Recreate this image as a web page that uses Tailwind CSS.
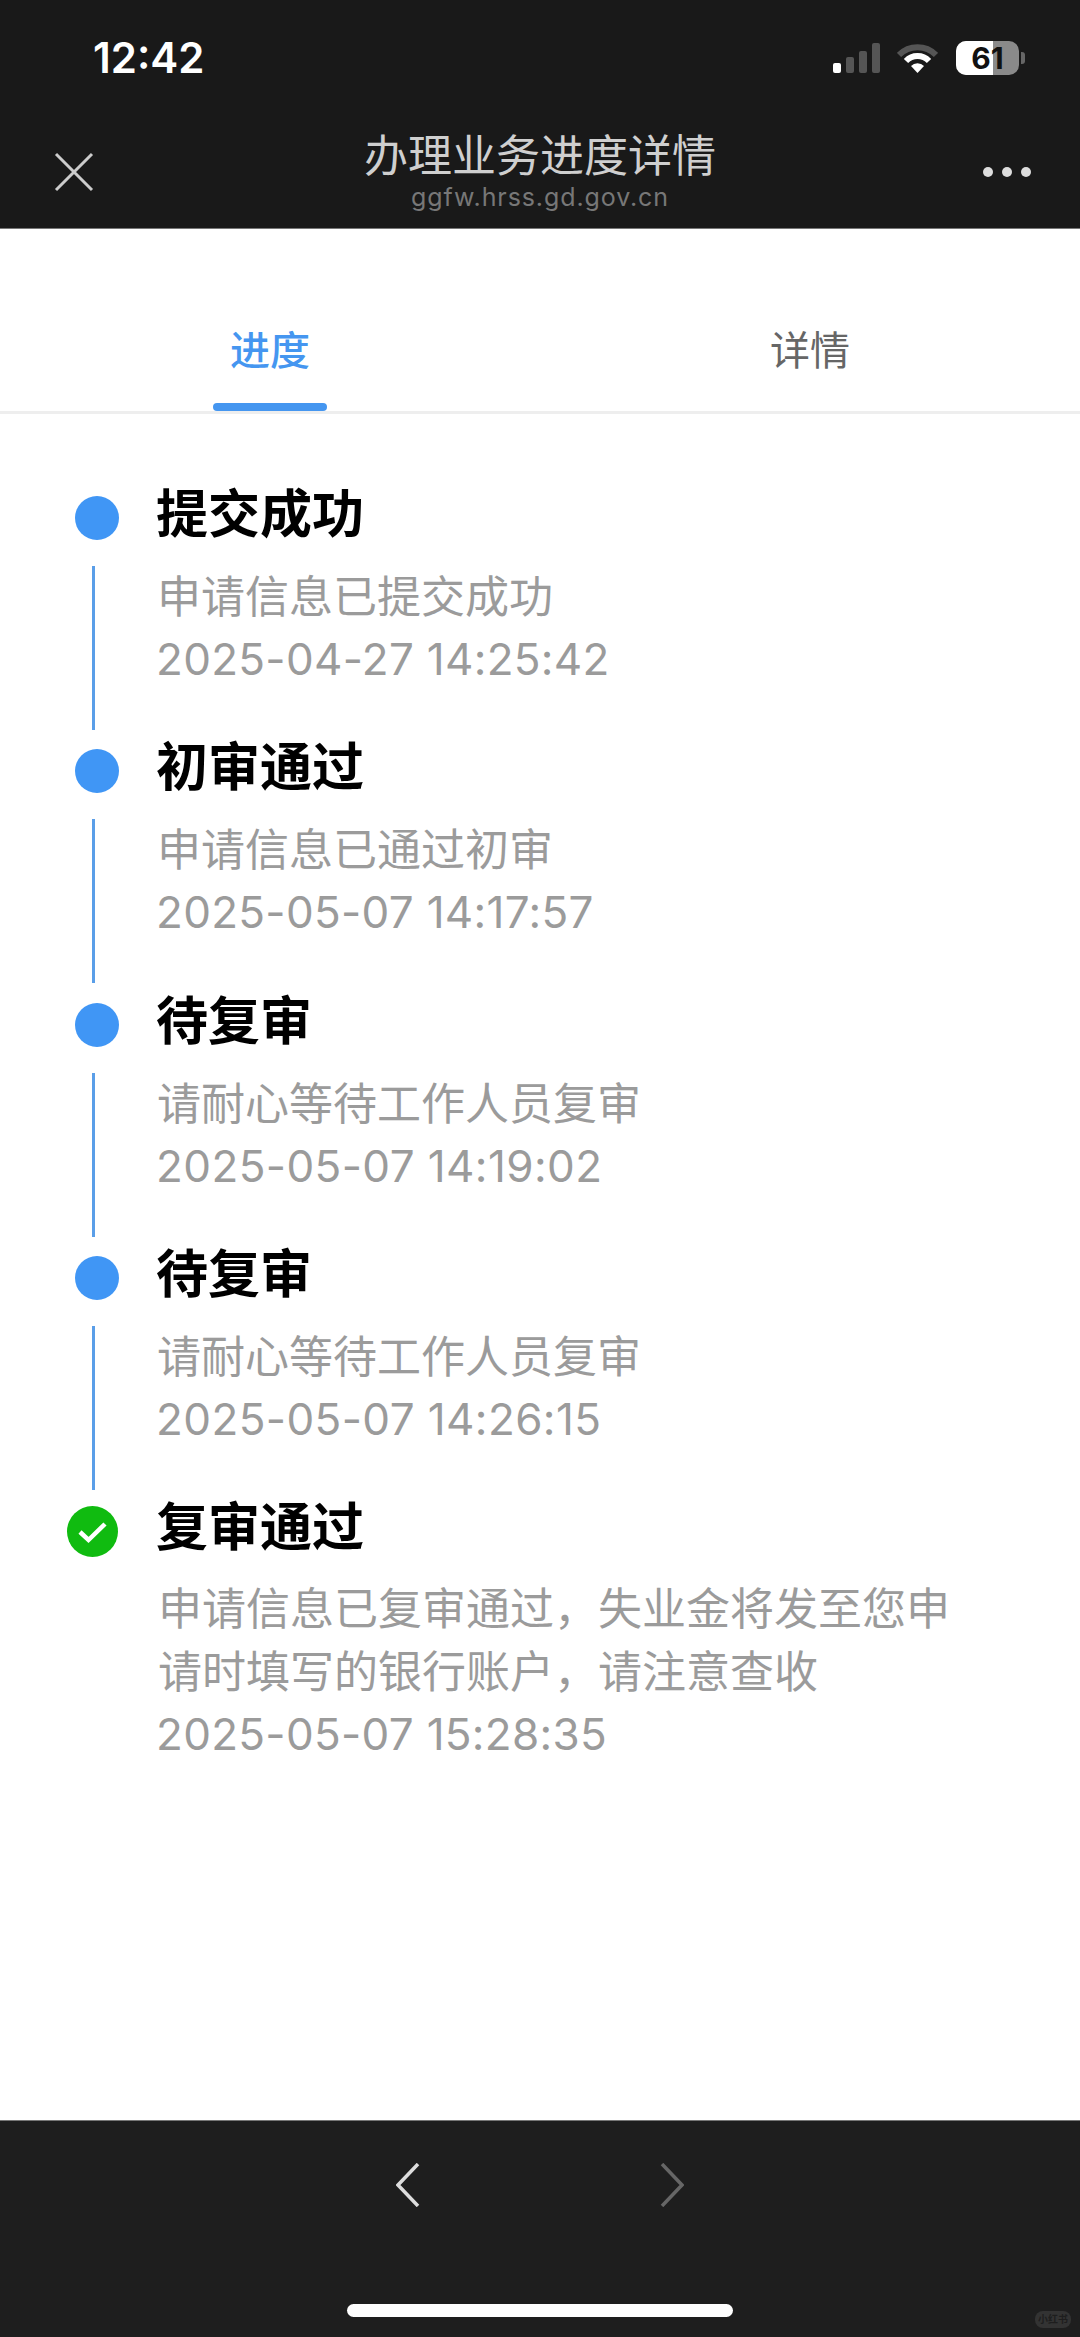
<!DOCTYPE html>
<html lang="zh">
<head>
<meta charset="UTF-8">
<title>办理业务进度详情</title>
<script src="https://cdn.jsdelivr.net/npm/@tailwindcss/browser@4"></script>
</head>
<body class="bg-white font-['Inter','Noto_Sans_CJK_SC',sans-serif]">
<div class="w-[1080px] h-[2337px] flex flex-col overflow-hidden">

  <!-- Top bars -->
  <header class="h-[229px] bg-[#191919] border-b border-[#777] shrink-0 flex flex-col">
    <div class="h-[118px] flex items-start pt-[37px] pl-[93px] pr-[55px]">
      <span class="text-[42px] leading-[42px] font-semibold text-white">12:42</span>
      <div class="ml-auto flex items-center mt-[4px]">
        <div class="flex items-end gap-[5px] h-[30px]">
          <span class="w-[8px] h-[10px] rounded-[2px] bg-white"></span>
          <span class="w-[8px] h-[16px] rounded-[2px] bg-[#555]"></span>
          <span class="w-[8px] h-[22px] rounded-[2px] bg-[#555]"></span>
          <span class="w-[8px] h-[30px] rounded-[2px] bg-[#555]"></span>
        </div>
        <svg class="ml-[17px]" width="41" height="30" viewBox="0 0 41 30">
          <path d="M2 12 A26 26 0 0 1 39 12" fill="none" stroke="#555" stroke-width="6"/>
          <path d="M9 18 A16 16 0 0 1 32 18" fill="none" stroke="#fff" stroke-width="6"/>
          <path d="M20.5 30 L14 23 A9 9 0 0 1 27 23 Z" fill="#fff"/>
        </svg>
        <div class="ml-[18px] relative w-[63px] h-[34px] rounded-[10px] overflow-hidden flex bg-[#8a8a8a]">
          <span class="w-[37px] bg-white"></span>
          <span class="absolute inset-0 flex items-center justify-center text-[30px] font-bold text-[#111] leading-none">61</span>
        </div>
        <span class="ml-[2px] w-[4px] h-[12px] rounded-r-[3px] bg-[#666]"></span>
      </div>
    </div>
    <div class="flex-1 flex items-start relative">
      <svg class="absolute left-[54px] top-[34px]" width="40" height="40" viewBox="0 0 40 40">
        <path d="M2 2 L38 38 M38 2 L2 38" stroke="#ccc" stroke-width="3" fill="none"/>
      </svg>
      <div class="w-full flex flex-col items-center">
        <span class="text-[44px] leading-[56px] text-[#cfcfcf] mt-[10px]">办理业务进度详情</span>
        <span class="text-[25px] leading-[28px] text-[#777] tracking-[0.9px] -mt-[1px]">ggfw.hrss.gd.gov.cn</span>
      </div>
      <div class="absolute right-[49px] top-[49px] flex gap-[9px]">
        <span class="w-[10px] h-[10px] rounded-full bg-[#ddd]"></span>
        <span class="w-[10px] h-[10px] rounded-full bg-[#ddd]"></span>
        <span class="w-[10px] h-[10px] rounded-full bg-[#ddd]"></span>
      </div>
    </div>
  </header>

  <!-- Tabs -->
  <nav class="h-[185px] shrink-0 flex items-end border-b-[3px] border-[#eee]">
    <div class="w-[540px] flex flex-col items-center">
      <span class="text-[40px] leading-[56px] font-medium text-[#4596f0]">进度</span>
      <span class="mt-[24px] w-[114px] h-[8px] rounded-[4px] bg-[#4596f0]"></span>
    </div>
    <div class="w-[540px] flex flex-col items-center">
      <span class="text-[40px] leading-[56px] text-[#666]">详情</span>
      <span class="mt-[24px] h-[8px]"></span>
    </div>
  </nav>

  <!-- Timeline -->
  <main class="flex-1 pt-[73px]">
    <div class="flex h-[253.3px]">
      <div class="w-[158px] pl-[75px] shrink-0 flex flex-col">
        <span class="mt-[9px] w-[44px] h-[44px] rounded-full bg-[#4096f5]"></span>
        <span class="mt-[26px] ml-[17px] w-[3px] h-[164px] bg-[#5a9ee8]"></span>
      </div>
      <div>
        <h2 class="text-[52px] leading-[56px] font-semibold text-black -ml-[2px]">提交成功</h2>
        <p class="mt-[23px] text-[44px] leading-[62px] -ml-[1px] text-[#9b9b9b]">申请信息已提交成功</p>
        <p class="text-[44px] leading-[62px] tracking-[0.3px] -ml-[2px] text-[#9b9b9b]">2025-04-27 14:25:42</p>
      </div>
    </div>
    <div class="flex h-[253.3px]">
      <div class="w-[158px] pl-[75px] shrink-0 flex flex-col">
        <span class="mt-[9px] w-[44px] h-[44px] rounded-full bg-[#4096f5]"></span>
        <span class="mt-[26px] ml-[17px] w-[3px] h-[164px] bg-[#5a9ee8]"></span>
      </div>
      <div>
        <h2 class="text-[52px] leading-[56px] font-semibold text-black -ml-[2px]">初审通过</h2>
        <p class="mt-[23px] text-[44px] leading-[62px] -ml-[1px] text-[#9b9b9b]">申请信息已通过初审</p>
        <p class="text-[44px] leading-[62px] tracking-[0.3px] -ml-[2px] text-[#9b9b9b]">2025-05-07 14:17:57</p>
      </div>
    </div>
    <div class="flex h-[253.3px]">
      <div class="w-[158px] pl-[75px] shrink-0 flex flex-col">
        <span class="mt-[9px] w-[44px] h-[44px] rounded-full bg-[#4096f5]"></span>
        <span class="mt-[26px] ml-[17px] w-[3px] h-[164px] bg-[#5a9ee8]"></span>
      </div>
      <div>
        <h2 class="text-[52px] leading-[56px] font-semibold text-black -ml-[2px]">待复审</h2>
        <p class="mt-[23px] text-[44px] leading-[62px] -ml-[1px] text-[#9b9b9b]">请耐心等待工作人员复审</p>
        <p class="text-[44px] leading-[62px] tracking-[0.4px] -ml-[2px] text-[#9b9b9b]">2025-05-07 14:19:02</p>
      </div>
    </div>
    <div class="flex h-[253.3px]">
      <div class="w-[158px] pl-[75px] shrink-0 flex flex-col">
        <span class="mt-[9px] w-[44px] h-[44px] rounded-full bg-[#4096f5]"></span>
        <span class="mt-[26px] ml-[17px] w-[3px] h-[164px] bg-[#5a9ee8]"></span>
      </div>
      <div>
        <h2 class="text-[52px] leading-[56px] font-semibold text-black -ml-[2px]">待复审</h2>
        <p class="mt-[23px] text-[44px] leading-[62px] -ml-[1px] text-[#9b9b9b]">请耐心等待工作人员复审</p>
        <p class="text-[44px] leading-[62px] tracking-[0.4px] -ml-[2px] text-[#9b9b9b]">2025-05-07 14:26:15</p>
      </div>
    </div>
    <div class="flex">
      <div class="w-[158px] pl-[67px] shrink-0">
        <svg class="mt-[6px]" width="51" height="51" viewBox="0 0 51 51">
          <circle cx="25.5" cy="25.5" r="25.5" fill="#10bb10"/>
          <path d="M13 26 L21.5 34 L38 18" fill="none" stroke="#fff" stroke-width="4.5"/>
        </svg>
      </div>
      <div class="w-[800px]">
        <h2 class="text-[52px] leading-[56px] font-semibold text-black -ml-[2px]">复审通过</h2>
        <p class="mt-[22px] text-[44px] leading-[62.5px] text-[#9b9b9b]">申请信息已复审通过，失业金将发至您申<br>请时填写的银行账户，请注意查收</p>
        <p class="text-[44px] leading-[62px] tracking-[0.3px] -ml-[2px] text-[#9b9b9b]">2025-05-07 15:28:35</p>
      </div>
    </div>
  </main>

  <!-- Bottom bar -->
  <footer class="h-[217px] bg-[#1e1e1e] border-t border-[#777] shrink-0 relative flex flex-col items-center">
    <div class="flex items-center gap-[240px] mt-[42px]">
      <svg width="24" height="44" viewBox="0 0 24 44"><path d="M22 1 L2 22 L22 43" fill="none" stroke="#ddd" stroke-width="3.5"/></svg>
      <svg width="24" height="44" viewBox="0 0 24 44"><path d="M2 1 L22 22 L2 43" fill="none" stroke="#666" stroke-width="3.5"/></svg>
    </div>
    <span class="mt-[97px] w-[386px] h-[13px] rounded-full bg-white"></span>
    <span class="absolute right-[9px] bottom-[9px] w-[36px] h-[17px] rounded-[8px] bg-[#333] text-[10px] leading-[17px] text-center text-[#1e1e1e] font-bold">小红书</span>
  </footer>
</div>
</body>
</html>
